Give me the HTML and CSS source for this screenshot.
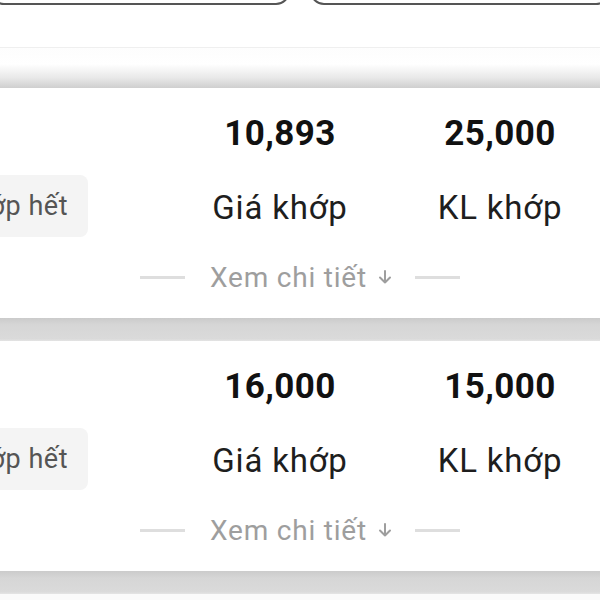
FILE: index.html
```html
<!doctype html>
<html lang="vi">
	<head>
		<meta charset="utf-8">
		<meta name="viewport" content="width=device-width, initial-scale=1">
		<title>Lệnh khớp</title>

		<link rel="stylesheet" href="styles.css">
	</head>
	<body>
		<div class="tabs">
			<div class="tab"></div>
			<div class="tab"></div>
		</div>
		<div class="spacer"></div>
		<div class="bandTop"></div>

		<div class="card">
			<div class="nums">
				<span class="num">10,893</span>
				<span class="num">25,000</span>
			</div>
			<div class="labels">
				<div class="chip">Khớp hết</div>
				<span class="label">Giá khớp</span>
				<span class="label">KL khớp</span>
			</div>
			<div class="more">
				<span class="line"></span>
				<span class="moreText">Xem chi tiết</span>
				<svg class="arrow" width="16" height="16" viewBox="0 0 16 16">
					<path d="M8 2V13.5M3 8.5L8 13.5L13 8.5" fill="none" stroke="#9e9e9e" stroke-width="2" stroke-linecap="round" stroke-linejoin="round"/>
				</svg>
				<span class="line"></span>
			</div>
		</div>
		<div class="band"></div>

		<div class="card">
			<div class="nums">
				<span class="num">16,000</span>
				<span class="num">15,000</span>
			</div>
			<div class="labels">
				<div class="chip">Khớp hết</div>
				<span class="label">Giá khớp</span>
				<span class="label">KL khớp</span>
			</div>
			<div class="more">
				<span class="line"></span>
				<span class="moreText">Xem chi tiết</span>
				<svg class="arrow" width="16" height="16" viewBox="0 0 16 16">
					<path d="M8 2V13.5M3 8.5L8 13.5L13 8.5" fill="none" stroke="#9e9e9e" stroke-width="2" stroke-linecap="round" stroke-linejoin="round"/>
				</svg>
				<span class="line"></span>
			</div>
		</div>
		<div class="band"></div>
	</body>
</html>
```

FILE: styles.css
```css
body {
    margin: 0;
    width: 600px;
    height: 600px;
    overflow: hidden;
    background: #fafafa;
    font-family: Roboto, "Noto Sans", sans-serif;
}

.tabs {
    display: flex;
    gap: 20px;
    margin: -40px -10px 0;
    background: #fff;
}

.tab {
    flex: 1;
    height: 45px;
    box-sizing: border-box;
    border: 2px solid #555;
    border-radius: 14px;
}

.spacer {
    height: 42px;
    background: #fff;
    border-bottom: 1px solid #efefef;
}

.bandTop {
    height: 40px;
    background: linear-gradient(to bottom, #fdfdfd 0%, #fff 40%, #e8e8e8 75%, #cfcfcf 100%);
}

.card {
    height: 230px;
    box-sizing: border-box;
    padding-top: 26px;
    background: #fff;
}

.band {
    height: 23px;
    background: linear-gradient(to bottom, #cbcbcb 0%, #d6d6d6 30%, #dadada 90%, #e4e4e4 100%);
}

.nums, .labels {
    display: grid;
    grid-template-columns: 170px 220px 220px;
}

.num {
    text-align: center;
    font-size: 35px;
    line-height: 40px;
    font-weight: 700;
    letter-spacing: 0.4px;
    color: #111;
}

.nums .num:first-child {
    grid-column-start: 2;
}

.labels {
    margin-top: 21px;
    height: 62px;
    align-items: center;
}

.label {
    padding-top: 3px;
    text-align: center;
    font-size: 33px;
    line-height: 38px;
    letter-spacing: 0.8px;
    color: #1e1e1e;
}

.chip {
    display: flex;
    align-items: center;
    justify-content: flex-end;
    width: 150px;
    height: 62px;
    box-sizing: border-box;
    margin-left: -62px;
    padding-right: 20px;
    border-radius: 8px;
    background: #f4f4f4;
    font-size: 27px;
    letter-spacing: 0.5px;
    color: #555;
    white-space: nowrap;
}

.more {
    display: flex;
    justify-content: center;
    align-items: center;
    margin-top: 25px;
    height: 30px;
}

.line {
    width: 45px;
    height: 3px;
    background: #dedede;
}

.moreText {
    margin-left: 25px;
    font-size: 28px;
    letter-spacing: 0.8px;
    color: #9e9e9e;
}

.arrow {
    margin-left: 10px;
    margin-right: 22px;
}
```
